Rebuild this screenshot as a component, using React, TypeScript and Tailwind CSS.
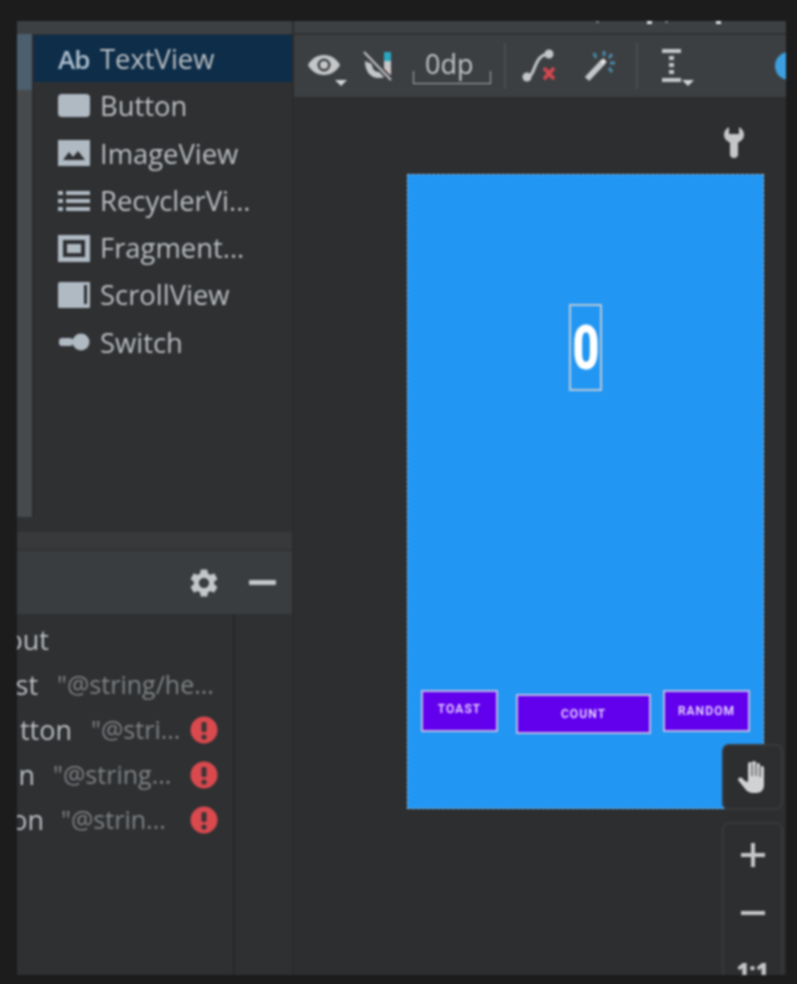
import React from "react";

const G = "#b0bac3";

function PaletteRow({ icon, label, selected }: { icon: React.ReactNode; label: string; selected?: boolean }) {
  return (
    <div className={`flex h-[47.3px] items-center pl-[24px] ${selected ? "bg-[#0d2d49]" : ""}`}>
      <div className="flex w-[42px] shrink-0 items-center">{icon}</div>
      <span className="whitespace-nowrap text-[27.4px] leading-none text-[#bcbfc2]">{label}</span>
    </div>
  );
}

const Svg = ({ children, w = 32, h = 28 }: { children: React.ReactNode; w?: number; h?: number }) => (
  <svg width={w} height={h} viewBox={`0 0 ${w} ${h}`} className="block">{children}</svg>
);

function TreeRow({ clip, inset = 0, name, hint, gap, err }: { clip: number; inset?: number; name: string; hint?: string; gap: number; err?: boolean }) {
  return (
    <div className="relative flex h-[45px] items-center">
      <div
        className="flex shrink-0 justify-end overflow-hidden whitespace-nowrap text-[27px] leading-[36px] text-[#bcbfc2]"
        style={{ width: clip - inset, marginLeft: inset }}
      >
        {name}
      </div>
      {hint && (
        <span className="whitespace-nowrap text-[25px] leading-none text-[#808385]" style={{ marginLeft: gap }}>
          {hint}
        </span>
      )}
      {err && (
        <svg width="28" height="28" viewBox="0 0 28 28" className="absolute left-[173px]">
          <circle cx="14" cy="14" r="13.5" fill="#d9494e" />
          <rect x="11.5" y="6" width="5" height="10" rx="1.5" fill="#3b3436" />
          <circle cx="14" cy="21" r="2.6" fill="#3b3436" />
        </svg>
      )}
    </div>
  );
}

function Caret({ className }: { className: string }) {
  return (
    <svg width="12" height="6" viewBox="0 0 12 6" className={className}>
      <path d="M0 0h12L6 6z" fill="#d3d5d7" />
    </svg>
  );
}

function PhoneButton({ label, className }: { label: string; className: string }) {
  return (
    <div className={`flex items-center justify-center border-2 border-solid border-[#bdb8e2] bg-[#6200ee] font-['Roboto',sans-serif] text-[12px] font-medium tracking-[1.1px] text-[#f3e9ff] ${className}`}>
      {label}
    </div>
  );
}

export default function App() {
  return (
    <div className="h-[984px] w-[797px] overflow-hidden bg-[#1c1c1c] pl-[17px] pt-[21px] font-['Open_Sans',sans-serif]">
      <div className="flex h-[954px] w-[769px] bg-[#2b2c2e] blur-[0.8px]">
        {/* Left column */}
        <div className="flex w-[275px] shrink-0 flex-col bg-[#2e3032]">
          <div className="h-[13px] shrink-0 bg-[#3d4042]" />
          <div className="flex h-[483px] shrink-0">
            <div className="w-[15px] shrink-0 bg-[#464a4c]">
              <div className="h-[56px] bg-[#4c5f6e]" />
            </div>
            <div className="w-[2px] shrink-0 bg-[#2a2b2d]" />
            <div className="min-w-0 flex-1 pt-[1px]">
              <PaletteRow
                selected
                label="TextView"
                icon={<span className="text-[26px] font-semibold leading-none tracking-[-1px] text-[#aebfce]">Ab</span>}
              />
              <PaletteRow label="Button" icon={<Svg><rect y="2" width="32" height="23" rx="4" fill={G} /></Svg>} />
              <PaletteRow
                label="ImageView"
                icon={
                  <Svg>
                    <rect y="1" width="32" height="26" fill={G} />
                    <path d="M5 21l6-8 4 5 5-6 7 9z" fill="#2e3032" />
                  </Svg>
                }
              />
              <PaletteRow
                label="RecyclerVi..."
                icon={
                  <Svg>
                    <rect y="4" width="5" height="4" fill={G} />
                    <rect y="12" width="5" height="4" fill={G} />
                    <rect y="20" width="5" height="4" fill={G} />
                    <rect x="8" y="4" width="24" height="4" fill={G} />
                    <rect x="8" y="12" width="24" height="4" fill={G} />
                    <rect x="8" y="20" width="24" height="4" fill={G} />
                  </Svg>
                }
              />
              <PaletteRow
                label="Fragment..."
                icon={
                  <Svg>
                    <path fillRule="evenodd" d="M0 1h32v27H0zM5 6v17h22V6z" fill={G} />
                    <rect x="9" y="10" width="14" height="9" fill={G} />
                  </Svg>
                }
              />
              <PaletteRow
                label="ScrollView"
                icon={
                  <Svg>
                    <path fillRule="evenodd" d="M2 1h30v25a1 1 0 0 1-1 1H1a1 1 0 0 1-1-1V3a2 2 0 0 1 2-2zM26 4v19h3V4z" fill={G} />
                  </Svg>
                }
              />
              <PaletteRow
                label="Switch"
                icon={
                  <Svg>
                    <rect x="1" y="10" width="14" height="8" rx="3" fill={G} />
                    <circle cx="23" cy="14" r="8.5" fill={G} />
                  </Svg>
                }
              />
            </div>
          </div>
          <div className="h-[15px] shrink-0" />
          <div className="h-[17px] shrink-0 bg-[#37393b]" />
          <div className="h-[2px] shrink-0 bg-[#303133]" />
          <div className="flex h-[63px] shrink-0 items-center justify-end bg-[#3a3d3f] pr-[16px]">
            <svg width="34" height="34" viewBox="0 0 24 24" className="mr-[28px]">
              <path
                fill="#c4c6c8"
                d="M19.14 12.94c.04-.3.06-.61.06-.94 0-.32-.02-.64-.07-.94l2.03-1.58c.18-.14.23-.41.12-.61l-1.92-3.32c-.12-.22-.37-.29-.59-.22l-2.39.96c-.5-.38-1.03-.7-1.62-.94l-.36-2.54c-.04-.24-.24-.41-.48-.41h-3.84c-.24 0-.43.17-.47.41l-.36 2.54c-.59.24-1.13.57-1.62.94l-2.39-.96c-.22-.08-.47 0-.59.22L2.74 8.87c-.12.21-.08.47.12.61l2.03 1.58c-.05.3-.09.63-.09.94s.02.64.07.94l-2.03 1.58c-.18.14-.23.41-.12.61l1.92 3.32c.12.22.37.29.59.22l2.39-.96c.5.38 1.03.7 1.62.94l.36 2.54c.05.24.24.41.48.41h3.84c.24 0 .44-.17.47-.41l.36-2.54c.59-.24 1.13-.56 1.62-.94l2.39.96c.22.08.47 0 .59-.22l1.92-3.32c.12-.22.07-.47-.12-.61l-2.01-1.58zM12 15.6c-1.98 0-3.6-1.62-3.6-3.6s1.62-3.6 3.6-3.6 3.6 1.62 3.6 3.6-1.62 3.6-3.6 3.6z"
              />
            </svg>
            <div className="h-[5px] w-[27px] rounded-[1px] bg-[#c4c6c8]" />
          </div>
          <div className="flex min-h-0 flex-1">
            <div className="w-[218px] shrink-0 border-r-2 border-[#27282a] pt-[3px]">
              <TreeRow clip={32} name="ConstraintLayout" gap={0} />
              <TreeRow clip={21} name="button_toast" hint={'"@string/he...'} gap={19} />
              <TreeRow clip={55} inset={2} name="Button" hint={'"@stri...'} gap={19} err />
              <TreeRow clip={18} inset={3} name="button" hint={'"@string...'} gap={18} err />
              <TreeRow clip={27} name="button" hint={'"@strin...'} gap={17} err />
            </div>
            <div className="flex-1" />
          </div>
        </div>

        {/* Vertical divider */}
        <div className="w-[2px] shrink-0 bg-[#2a2b2d]" />

        {/* Right column */}
        <div className="relative flex min-w-0 flex-1 flex-col overflow-hidden bg-[#2d2e30]">
          <div className="flex h-[12px] shrink-0 items-start bg-[#3d4042] pl-[302px]">
            <div className="h-[2px] w-[3px] rounded-full bg-[#888]" />
            <div className="ml-[48px] h-[3px] w-[5px] bg-[#e4e4e4]" />
            <div className="ml-[13px] h-[2px] w-[3px] rounded-full bg-[#888]" />
            <div className="ml-[48px] h-[3px] w-[5px] bg-[#e4e4e4]" />
          </div>
          <div className="h-[2px] shrink-0 bg-[#2f3133]" />
          <div className="relative flex h-[62px] shrink-0 items-center bg-[#3c3f41] pl-[14px]">
            {/* eye */}
            <div className="relative h-[40px] w-[44px] shrink-0">
              <svg width="32" height="20" viewBox="0 0 32 20" className="mt-[9px]">
                <path fillRule="evenodd" d="M16 0c7 0 13 4 16 10-3 6-9 10-16 10S3 16 0 10C3 4 9 0 16 0zm0 3.5a6.5 6.5 0 1 0 0 13 6.5 6.5 0 0 0 0-13z" fill="#c4c6c8" />
                <circle cx="16" cy="10" r="4" fill="#c4c6c8" />
              </svg>
              <Caret className="absolute left-[27px] top-[34px]" />
            </div>
            {/* magnet off */}
            <svg width="32" height="32" viewBox="0 0 32 32" className="ml-[11px] shrink-0">
              <path d="M2 11c0 11 6 17 14 17 6 0 11-3 12-8V6h-7v13c-1 2-3 3-5 3-4 0-7-3-7-8z" fill="#c4c6c8" />
              <rect x="21" y="2" width="7" height="9" fill="#2aa6bf" />
              <rect x="21" y="19" width="7" height="6" fill="#d8c4c4" />
              <path d="M1 2l27 28" stroke="#3c3f41" strokeWidth="6" />
              <path d="M1 2l27 28" stroke="#c4c6c8" strokeWidth="2" />
            </svg>
            {/* 0dp */}
            <div className="relative ml-[18px] h-[40px] w-[78px] shrink-0">
              <span className="absolute left-[12px] top-[-1px] text-[27px] leading-[38px] text-[#c4c6c8]">0dp</span>
              <div className="absolute bottom-[2px] left-0 h-[13px] w-full border-x border-b border-[#a8abad]" />
            </div>
            <div className="ml-[13px] h-[46px] w-[2px] shrink-0 bg-[#4a4d4f]" />
            {/* path with x */}
            <svg width="34" height="34" viewBox="0 0 34 34" className="ml-[16px] shrink-0">
              <path d="M4 29C14 29 11 5 27 5" fill="none" stroke="#c4c6c8" strokeWidth="3" />
              <circle cx="5" cy="28" r="4.5" fill="#c4c6c8" />
              <circle cx="27" cy="5" r="4.5" fill="#c4c6c8" />
              <path d="M22 19l10 11M32 19L22 30" stroke="#d9474f" strokeWidth="3.5" />
            </svg>
            {/* wand */}
            <svg width="34" height="34" viewBox="0 0 34 34" className="ml-[28px] shrink-0">
              <path d="M3 30L19 13" stroke="#c4c6c8" strokeWidth="6" />
              <path d="M18 14l3-3" stroke="#e8e8e8" strokeWidth="5" />
              <path d="M10 4l2 5M20 2v5M28 5l-3 4M31 14h-5M28 23l-3-4" stroke="#4a88a8" strokeWidth="3" />
            </svg>
            <div className="ml-[18px] h-[46px] w-[2px] shrink-0 bg-[#4a4d4f]" />
            {/* baseline tool */}
            <div className="relative ml-[24px] h-[34px] w-[20px] shrink-0">
              <svg width="20" height="34" viewBox="0 0 20 34">
                <rect width="19" height="4" fill="#c4c6c8" />
                <rect y="29" width="19" height="4" fill="#c4c6c8" />
                <rect x="7" y="7" width="5" height="4" fill="#c4c6c8" />
                <rect x="7" y="14" width="5" height="4" fill="#c4c6c8" />
                <rect x="7" y="21" width="5" height="4" fill="#c4c6c8" />
              </svg>
              <Caret className="absolute left-[20px] top-[31px]" />
            </div>
            <div className="absolute left-[481px] top-[17px] h-[28px] w-[28px] rounded-full bg-[#3d9fe0]" />
          </div>
          <div className="h-[1px] shrink-0 bg-[#2a2b2d]" />

          {/* Canvas */}
          <div className="flex min-h-0 flex-1 flex-col">
            <div className="flex h-[76px] shrink-0 justify-end pr-[42px] pt-[28px]">
              <svg width="20" height="32" viewBox="0 0 20 32">
                <path d="M5 1v7h10V1c3 1.500 5 4.500 5 7.500 0 4-2.500 6.500-6 8V28a4 4 0 0 1-8 0V16.500C2.500 15 0 12.500 0 8.500 0 5.500 2 2.500 5 1z" fill="#c4c6c8" />
              </svg>
            </div>
            <div className="ml-[113px] flex h-[635px] w-[357px] flex-col border border-dashed border-[#8fb8d8] bg-[#2196f3]">
              <div className="ml-[161px] mt-[129px] flex h-[87px] w-[33px] items-center justify-center border-2 border-[#b9c9d8] font-['Roboto',sans-serif] text-[62px] font-black leading-none text-white">
                <span className="scale-x-[0.75]">0</span>
              </div>
              <div className="mt-[299px] flex items-start pl-[13px]">
                <PhoneButton label="TOAST" className="h-[42px] w-[77px] pb-[4px]" />
                <PhoneButton label="COUNT" className="ml-[18px] mt-[4px] h-[40px] w-[135px]" />
                <PhoneButton label="RANDOM" className="ml-[12px] h-[42px] w-[87px]" />
              </div>
            </div>
          </div>

          {/* Floating controls */}
          <div className="absolute left-[428px] top-[723px] flex h-[66px] w-[61px] items-center justify-center rounded-[7px] border-2 border-[#38393b] bg-[#2d2e30]">
            <svg width="32" height="34" viewBox="0 0 32 34">
              <path
                fill="#d0d2d4"
                d="M11 4a2 2 0 0 1 4 0v-1a2 2 0 0 1 4 0v2a2 2 0 0 1 4 0v3a2 2 0 0 1 4 0v17c0 5-3 8-8 8h-3c-3 0-5-1-7-3L1 20c0-2 2-3 4-2l3 3 3 1V6z"
              />
              <path d="M15 4v12M19 4v12M23 7v10" stroke="#2d2e30" strokeWidth="1" />
            </svg>
          </div>
          <div className="absolute left-[428px] top-[801px] flex h-[190px] w-[61px] flex-col items-center rounded-[7px] border-2 border-[#38393b] bg-[#2d2e30] pt-[19px]">
            <svg width="24" height="24" viewBox="0 0 24 24"><path d="M10 0h4v10h10v4H14v10h-4V14H0v-4h10z" fill="#c4c6c8" /></svg>
            <div className="mt-[44px] h-[4px] w-[24px] bg-[#c4c6c8]" />
            <div className="mt-[44px] text-[22px] font-extrabold leading-none text-[#c4c6c8]">1:1</div>
          </div>
        </div>
      </div>
    </div>
  );
}
